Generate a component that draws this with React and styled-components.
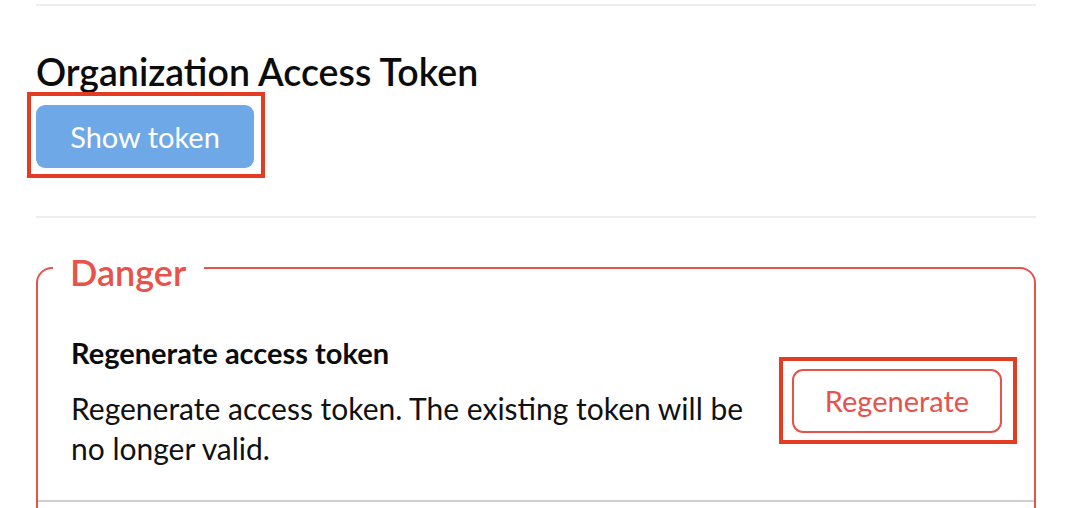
import React from 'react';
import styled, { createGlobalStyle } from 'styled-components';

const GlobalStyle = createGlobalStyle`
	body {
		margin: 0;
		background: #fff;
		font-family: Lato, 'Noto Sans', sans-serif;
		color: #111;
	}
`;

function App() {
	return (
		<>
			<GlobalStyle />
			<Page>
				<Divider />
				<Section>
					<Heading>Organization Access Token</Heading>
					<Highlight $top={13} $right={11} $bottom={10} $left={9}>
						<PrimaryButton>Show token</PrimaryButton>
					</Highlight>
				</Section>
				<Divider $gap={48} />
				<DangerZone>
					<DangerLegend>Danger</DangerLegend>
					<DangerRow>
						<RowText>
							<RowTitle>Regenerate access token</RowTitle>
							<RowDesc>Regenerate access token. The existing token will be no longer valid.</RowDesc>
						</RowText>
						<Highlight $top={12} $right={15} $bottom={11} $left={13}>
							<OutlineButton>Regenerate</OutlineButton>
						</Highlight>
					</DangerRow>
					<DangerRow $empty />
				</DangerZone>
			</Page>
		</>
	);
}

const Page = styled.div`
	width: 1000px;
	margin-left: 36px;
	padding-top: 4px;
`;

const Divider = styled.div`
	height: 2px;
	background: #ededed;
	margin-top: ${(p) => (p.$gap ? `${p.$gap}px` : '0')};
`;

const Section = styled.section`
	display: flex;
	flex-direction: column;
	align-items: flex-start;
	padding-top: 45px;
`;

const Heading = styled.h2`
	margin: 0 0 12px;
	font-size: 37.5px;
	line-height: 42px;
	font-weight: 600;
	color: #0c0c0c;
`;

// annotation box drawn over the control
const Highlight = styled.span`
	position: relative;
	display: inline-flex;
	flex-shrink: 0;

	&::after {
		content: '';
		position: absolute;
		top: -${(p) => p.$top}px;
		right: -${(p) => p.$right}px;
		bottom: -${(p) => p.$bottom}px;
		left: -${(p) => p.$left}px;
		border: 4px solid #e33c23;
		pointer-events: none;
	}
`;

const PrimaryButton = styled.button`
	width: 218px;
	height: 63px;
	border: none;
	border-radius: 9px;
	background: #6fa8e6;
	color: #fff;
	font-family: inherit;
	font-size: 29px;
	cursor: pointer;
`;

const DangerZone = styled.fieldset`
	margin: 24px 0 0;
	padding: 0;
	border: 2px solid #e8524a;
	border-radius: 16px;
	min-width: 0;
`;

const DangerLegend = styled.legend`
	margin-left: 15px;
	padding: 9px 18px 0 17px;
	font-size: 36px;
	line-height: 42px;
	font-weight: 600;
	color: #e8524a;
`;

const DangerRow = styled.div`
	display: flex;
	align-items: center;
	padding: ${(p) => (p.$empty ? '0' : '40px 32px 32px 33px')};
	min-height: ${(p) => (p.$empty ? '60px' : 'auto')};
	border-bottom: ${(p) => (p.$empty ? 'none' : '2px solid #cfcfcf')};
`;

const RowText = styled.div`
	flex: 1;
	max-width: 692px;
	margin-right: auto;
`;

const RowTitle = styled.div`
	font-size: 29px;
	line-height: 40px;
	font-weight: 700;
	color: #0c0c0c;
	margin-bottom: 15px;
`;

const RowDesc = styled.p`
	margin: 0;
	font-size: 30px;
	line-height: 40px;
	color: #111;
`;

const OutlineButton = styled.button`
	width: 210px;
	height: 64px;
	border: 2px solid #e8524a;
	border-radius: 11px;
	background: #fff;
	color: #e8524a;
	font-family: inherit;
	font-size: 29px;
	cursor: pointer;
`;

export default App;
